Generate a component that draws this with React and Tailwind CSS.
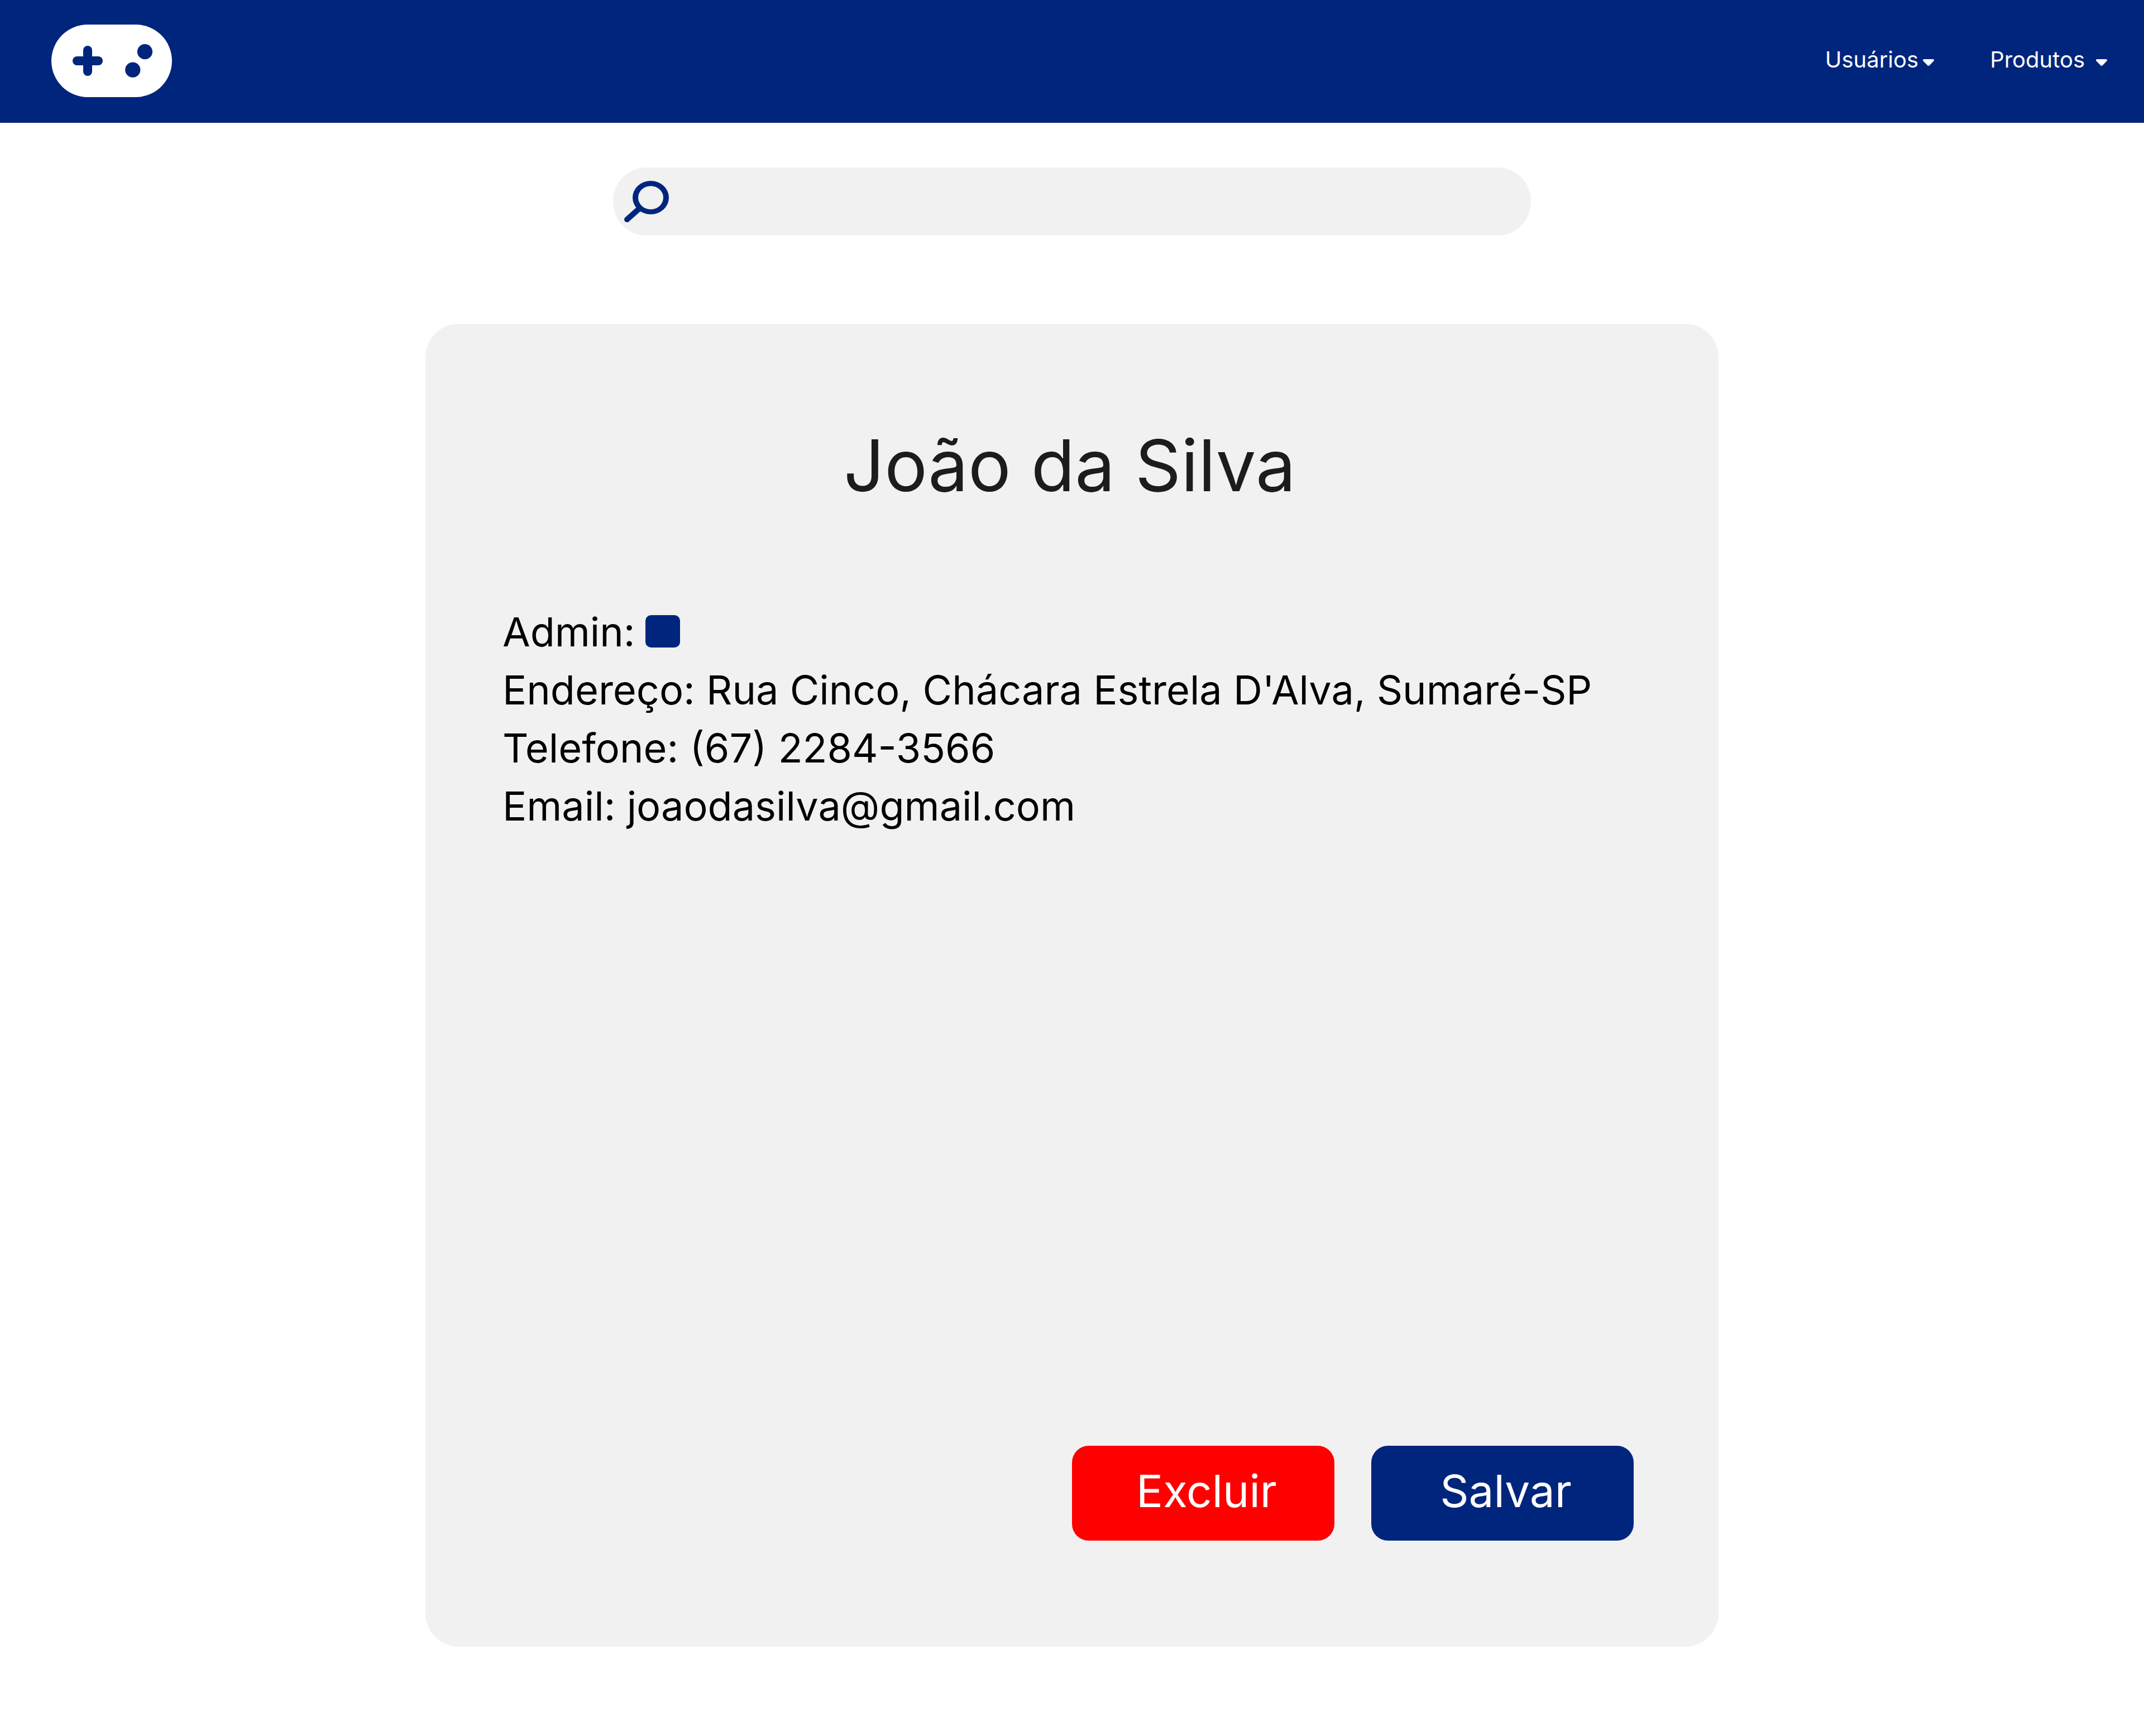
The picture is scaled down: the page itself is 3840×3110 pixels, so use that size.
function ControllerLogo() {
  return (
    <svg viewBox="0 0 216 130" className="h-[130px] w-[216px]" aria-hidden="true">
      <rect width="216" height="130" rx="65" fill="#fff" />
      <rect x="38" y="57" width="54" height="16" rx="8" fill="#00257d" />
      <rect x="57" y="38" width="16" height="54" rx="8" fill="#00257d" />
      <circle cx="167.5" cy="48.7" r="13.6" fill="#00257d" />
      <circle cx="145.8" cy="81.2" r="13.6" fill="#00257d" />
    </svg>
  );
}

function Caret() {
  return (
    <svg viewBox="0 0 20 12" className="mt-2.5 h-3 w-5" fill="#fff" aria-hidden="true">
      <path d="M2 0H18C19.8 0 20.6 2 19.4 3.3L11.6 11.2C10.7 12.2 9.3 12.2 8.4 11.2L0.6 3.3C-0.6 2 0.2 0 2 0Z" />
    </svg>
  );
}

function SearchIcon() {
  return (
    <svg viewBox="0 0 80 74" className="h-[74px] w-20 shrink-0" fill="none" stroke="#00257d" aria-hidden="true">
      <path d="M5 69.2L26 50.5" strokeWidth="10" strokeLinecap="round" />
      <path
        d="M47.5 0A32.5 30 0 1 1 47.5 60A32.5 30 0 1 1 47.5 0ZM47.5 9.2A22.5 20.9 0 1 0 47.5 51A22.5 20.9 0 1 0 47.5 9.2Z"
        fill="#00257d"
        stroke="none"
      />
    </svg>
  );
}

const details = [
  ["Endereço", "Rua Cinco, Chácara Estrela D'Alva, Sumaré-SP"],
  ["Telefone", "(67) 2284-3566"],
  ["Email", "joaodasilva@gmail.com"],
];

export default function App() {
  return (
    <div className="flex min-h-screen flex-col bg-white font-['Inter',sans-serif] text-black">
      <header className="flex items-center justify-between bg-[#00257d] pt-11 pr-[66px] pb-[46px] pl-[92px]">
        <a href="#inicio" aria-label="Início">
          <ControllerLogo />
        </a>
        <nav className="flex items-center gap-[100px] pb-1 text-[40px] leading-12 text-white">
          <button type="button" className="flex items-center gap-2">
            Usuários
            <Caret />
          </button>
          <button type="button" className="flex items-center gap-5">
            Produtos
            <Caret />
          </button>
        </nav>
      </header>

      <main className="flex flex-1 flex-col items-center px-10 pt-20 pb-40">
        <form role="search" className="flex w-full max-w-[1644px] items-center gap-6 rounded-[60px] bg-[#f1f1f1] px-5 py-6">
          <SearchIcon />
          <input type="search" aria-label="Buscar" className="min-w-0 flex-1 bg-transparent text-[40px] outline-none" />
        </form>

        <section className="mt-[158px] flex w-full max-w-[2316px] flex-1 flex-col rounded-[60px] bg-[#f1f1f1] px-[138px] pt-44 pb-[190px]">
          <h1 className="pr-2 text-center text-[128px] leading-[156px] text-[#1c1c1c]">João da Silva</h1>

          <div className="mt-[168px] text-[72px] leading-[104px]">
            <div className="flex items-center gap-[18px]">
              <label htmlFor="admin">Admin:</label>
              <input
                id="admin"
                type="checkbox"
                className="mb-0.5 h-[58px] w-[62px] appearance-none rounded-[10px] bg-[#00257d]"
              />
            </div>
            {details.map(([name, value]) => (
              <p key={name}>
                {name}: {value}
              </p>
            ))}
          </div>

          <div className="mt-auto mr-[14px] flex justify-end gap-[66px] text-[80px] leading-24 text-white">
            <button type="button" className="h-[170px] w-[470px] rounded-[30px] bg-[#ff0000] pb-2 pl-3">
              Excluir
            </button>
            <button type="button" className="h-[170px] w-[470px] rounded-[30px] bg-[#00257d] pb-2 pl-3">
              Salvar
            </button>
          </div>
        </section>
      </main>
    </div>
  );
}
